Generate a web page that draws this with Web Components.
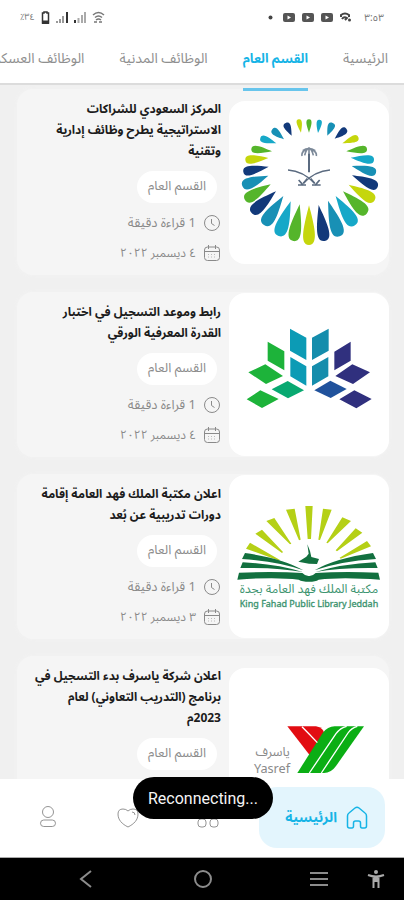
<!DOCTYPE html>
<html lang="ar" dir="rtl">
<head>
<meta charset="utf-8">
<meta name="viewport" content="width=device-width, initial-scale=1">
<title>القسم العام</title>
<style>
html, body { margin: 0; height: 100%; }
body { font-family: "Noto Sans Arabic", "Noto Sans", "DejaVu Sans", sans-serif; background: #fff; }
</style>
</head>
<body>
<news-app></news-app>

<script>
const define = (name, html, setup) => {
  const tpl = document.createElement('template');
  tpl.innerHTML = html;
  customElements.define(name, class extends HTMLElement {
    constructor() {
      super();
      this.attachShadow({ mode: 'open' }).append(tpl.content.cloneNode(true));
    }
    connectedCallback() { if (setup) setup(this, this.shadowRoot); }
  });
};

/* System status bar */
define('status-bar', `
<style>
:host { display: flex; direction: ltr; align-items: center; justify-content: space-between; height: 34px; padding: 0 20px; color: #777; font-size: 10px; flex: none; }
div { display: flex; align-items: center; gap: 7px; }
.l { gap: 6px; font-size: 9px; }
.dot { margin-right: 3px; }
.time { margin-left: 6px; }
svg { display: block; }
</style>
<div class="l">
  <span>٪٣٤</span>
  <svg width="9" height="13" viewBox="0 0 9 13"><path d="M3 1h3v1h1.500v10h-6V2H3z" fill="none" stroke="#333" stroke-width="1.500"/><path d="M1 9.500h7V13H1z" fill="#333"/></svg>
  <svg width="12" height="12" viewBox="0 0 12 12"><path d="M0 11h2M4 12V8M7 12V5" stroke="#999" stroke-width="2"/><path d="M11 12V1" stroke="#333" stroke-width="2"/></svg>
  <svg width="12" height="12" viewBox="0 0 12 12"><path d="M1 12V9" stroke="#333" stroke-width="2"/><path d="M4.500 12V7M8 12V4M11 12V1" stroke="#aaa" stroke-width="2"/></svg>
  <svg width="13" height="12" viewBox="0 0 13 12"><path d="M1 4q5.500-5 11 0M3 6.500q3.500-3 7 0M4 9q2.500-2 5 0M2 11h3M7 11h3" fill="none" stroke="#777" stroke-width="1.500"/></svg>
</div>
<div>
  <svg class="dot" width="5" height="5" viewBox="0 0 5 5"><circle cx="2.500" cy="2.500" r="2" fill="#444"/></svg>
  <svg width="12" height="9" viewBox="0 0 12 9"><rect width="12" height="9" rx="2" fill="#555"/><path d="M4.500 2.500v4L8 4.500z" fill="#fff"/></svg>
  <svg width="12" height="9" viewBox="0 0 12 9"><rect width="12" height="9" rx="2" fill="#555"/><path d="M4.500 2.500v4L8 4.500z" fill="#fff"/></svg>
  <svg width="12" height="9" viewBox="0 0 12 9"><rect width="12" height="9" rx="2" fill="#555"/><path d="M4.500 2.500v4L8 4.500z" fill="#fff"/></svg>
  <svg width="11" height="10" viewBox="0 0 11 10"><path d="M1 5V3q4-3 8 0v2M2 7q2-3 5-1l-2 2" fill="none" stroke="#444" stroke-width="2"/><circle cx="9.500" cy="8" r="1.500" fill="#444"/></svg>
  <span class="time">٣:٥٣</span>
</div>`);

/* Category tabs */
define('tab-item', `
<style>
:host { display: block; position: relative; flex: none; }
a { display: block; line-height: 50px; color: #8f8f8f; text-decoration: none; white-space: nowrap; }
:host([active]) a { color: #16b4e6; font-size: 13px; font-weight: 700; }
:host([active])::after { content: ""; position: absolute; left: 0; right: 0; bottom: -8px; height: 3px; background: #68c5ec; z-index: 2; }
</style><a href="#"><slot></slot></a>`);

define('tab-bar', `
<style>
:host { display: flex; gap: 35px; padding: 0 16px; height: 49px; font-size: 14px; background: #fff; border-bottom: 2px solid #dcdcdc; flex: none; position: relative; z-index: 2; }
</style><slot></slot>`);

/* Article card */
define('category-chip', `
<style>
:host { display: block; align-self: flex-start; margin: 9px 4px 10px; }
a { display: block; box-sizing: border-box; height: 32px; min-width: 80px; padding: 0 11px; line-height: 31px; border-radius: 16px; background: #fff; color: #8c8c8c; font-size: 13px; text-align: center; text-decoration: none; }
</style><a href="#"><slot></slot></a>`);

define('meta-row', `
<style>
:host { display: flex; align-items: center; gap: 7px; height: 20px; color: #8a8a8a; font-size: 13px; white-space: nowrap; }
:host([icon=date]) { font-size: 12px; }
svg { display: none; width: 18px; height: 18px; fill: none; stroke: #8a8a8a; flex: none; }
:host([icon=clock]) .clock, :host([icon=date]) .date { display: block; }
</style>
<svg class="clock" viewBox="0 0 18 18"><circle cx="9" cy="9" r="7.500"/><path d="M8.500 5v4.500l3 2"/></svg>
<svg class="date" viewBox="0 0 18 18"><rect x="1.500" y="3" width="15" height="13.500" rx="3"/><path d="M1.500 7.500h15M5.500 1v4M12.500 1v4"/><path d="M5 10.500h8M5 13h8" stroke-dasharray="1 2" stroke="#bbb"/></svg>
<span><slot></slot></span>`);

define('news-card', `
<style>
:host { display: flex; align-items: center; background: #f5f5f5; border-radius: 16px; box-shadow: 0 0 4px #f3f3f3; flex: none; }
.pic { width: 160px; height: 163px; border-radius: 16px; background: #fff; overflow: hidden; flex: none; }
.body { flex: 1; min-width: 0; display: flex; flex-direction: column; padding: 10px 8px 12px; }
h2 { margin: 0; font-size: 12px; line-height: 21px; font-weight: 700; color: #1c1c1c; white-space: nowrap; }
.meta { display: grid; gap: 10px; }
:host([folded]) .meta { visibility: hidden; }
</style>
<div class="pic"><slot name="logo"></slot></div>
<div class="body">
  <h2><slot name="title"></slot></h2>
  <category-chip>القسم العام</category-chip>
  <div class="meta"><meta-row icon="clock">1 قراءة دقيقة</meta-row><meta-row icon="date"><slot name="date"></slot></meta-row></div>
</div>`);

/* Logos */
const svgCss = '<style>:host{display:block;height:100%}svg{display:block;width:100%;height:100%}</style>';

define('logo-petals', svgCss + `
<svg viewBox="27 47 480 489"><g id="p"></g>
<g fill="none" stroke="#5b6b80" stroke-width="4"><path d="M267 205v56" stroke-width="6"/><path d="M246 212q-2-12 10-18M254 210q4-18 13-22M267 208v-22M280 210q-4-18-13-22M289 212q2-12-12-18M248 196q18-12 38 0" stroke-width="5" opacity=".8"/><path d="M204 254q45 3 80 40M330 254q-45 3-80 40" stroke-width="4"/><path d="M236 284l14 16M234 299h24M299 284l-14 16M276 299h26M262 280l-12 14M272 280l12 14" stroke-width="5"/></g></svg>`,
(host, root) => {
  const N = '#12397a', T = '#1890b5', C = '#16a8c8', G = '#55b52b', Y = '#c5d60c';
  /* outer x, outer y, inner x, inner y, width, colour */
  const petals = [
    [267,102,267,142,12,G],[236,102,243,142,12,Y],[299,103,294,143,12,C],[197,113,215,151,16,N],[338,113,322,151,16,T],
    [157,132,192,162,16,T],[379,130,344,160,16,N],[121,158,169,174,16,C],[415,156,367,174,16,Y],
    [94,191,156,198,17,G],[441,191,379,198,17,G],[76,224,145,218,19,Y],[462,224,392,217,19,C],
    [70,260,146,244,21,N],[468,262,395,242,21,T],[67,302,145,271,25,T],[473,305,396,270,23,N],
    [75,344,152,297,25,G],[464,345,386,298,25,Y],[95,383,168,318,27,N],[440,385,369,318,28,G],
    [132,419,190,332,29,T],[405,420,347,332,29,C],[176,452,212,348,29,C],[359,453,324,346,29,T],
    [220,467,239,357,27,G],[314,467,296,359,27,N],[267,479,267,360,27,Y]];
  root.getElementById('p').innerHTML = petals.map(([ox, oy, ix, iy, w, c]) => {
    const dx = ox - ix, dy = oy - iy, l = Math.hypot(dx, dy), nx = -dy / l * w, ny = dx / l * w;
    const at = (t, s) => `${Math.round(ix + dx * t + nx * s)} ${Math.round(iy + dy * t + ny * s)}`;
    return `<path fill="${c}" d="M${ix} ${iy}C${at(.45, .5)} ${at(1, 1.2)} ${ox} ${oy}C${at(1, -1.2)} ${at(.45, -.5)} ${ix} ${iy}z"/>`;
  }).join('');
});

define('logo-rhombs', svgCss + `
<svg viewBox="27 22 480 489">
<path fill="#0c9bb5" d="M210 129l49 27v67l-49-28zM211 214l48 28v58l-48-28z"/>
<path fill="#158dac" d="M326 129l-50 27v67l50-28zM325 214l-49 28v58l49-28z"/>
<path fill="#1db33a" d="M143 168l50 29v57l-50-29zM85 260l51-24 53 35-51 24zM80 341l41-27 55 26-50 27z"/>
<path fill="#08a971" d="M155 311l48-25 49 28-48 24z"/>
<path fill="#20529c" d="M380 310l-49-25-48 29 49 23z"/>
<path fill="#30307e" d="M392 168l-49 30v56l49-29zM450 260l-53-24-51 35 53 24zM455 340l-52-26-45 27 51 27z"/>
</svg>`);

define('logo-library', svgCss + `
<style>text{fill:#3d9470;font-family:"Noto Sans Arabic","Noto Sans","DejaVu Sans",sans-serif}</style>
<svg viewBox="27 14 480 489">
<path fill="#b5d016" d="M256 107h22l-5 99h-10zM198 118l26-3 18 93-5 2zM335 118l-26-3-14 93 5 1zM139 152l24-9 51 77-4 2zM393 152l-26-11-48 76 4 2zM106 190l20-12 63 67-3 3zM427 187l-20-13-60 66 4 3zM78 235l12-18 90 52-2 2zM453 228l-12-16-82 50 3 3z"/>
<path fill="#12703f" d="M75 248q115 16 175 52-75-27-184-34zM459 248q-115 16-175 52 75-27 184-34zM68 276q100 5 180 29-75-14-187-12zM466 276q-100 5-180 29 75-14 187-12zM57 307q110-4 190 1 10 10 20 9 10 1 20-9 80-5 188-1l5 21q-115-9-184 0-9 6-29 6-20 0-31-6-70-9-184 0z"/>
<path fill="#12703f" d="M262 222l8 20 4 18 23 6-6 15-24-1-32-6 24-15 7-9z"/>
<text x="267" y="369" font-size="37" text-anchor="middle" direction="rtl">مكتبة الملك فهد العامة بجدة</text>
<text x="267" y="410" font-size="27" text-anchor="middle" direction="ltr" stroke="#3d9470">King Fahad Public Library Jeddah</text>
</svg>`);

define('logo-yasref', svgCss + `
<style>text{fill:#8a8a8a;font-family:"Noto Sans Arabic","Noto Sans","DejaVu Sans",sans-serif}</style>
<svg viewBox="27 71 480 489">
<path fill="#e20c12" d="M202 246h86q24 5 24 22l-41 67z"/>
<path fill="#0bae14" d="M232 386l76-120q15-20 36-20h88l-84 119q-15 21-36 21z"/>
<path d="M246 247q21 21 46 48M268 386l80-118q13-18 32-22M304 386l80-120q10-15 28-20" fill="none" stroke="#fff" stroke-width="4"/>
<text x="158" y="335" font-size="38" text-anchor="middle" direction="rtl">ياسرف</text>
<text x="156" y="386" font-size="38" text-anchor="middle" direction="ltr">Yasref</text>
</svg>`);

/* Bottom navigation */
define('nav-item', `
<style>
:host { display: block; flex: 1; }
a { display: flex; align-items: center; justify-content: center; gap: 8px; height: 61px; color: #949494; text-decoration: none; font-size: 14px; border-radius: 18px; }
:host([active]) { flex: none; width: 126px; margin-left: 11px; }
:host([active]) a { justify-content: flex-start; padding: 0 16px; background: #e3f5fd; color: #16b4e6; font-weight: 700; }
</style><a href="#"><slot name="icon"></slot><slot></slot></a>`);

define('bottom-nav', `
<style>
:host { display: flex; align-items: flex-start; height: 70px; padding: 8px 19px 0 8px; background: #fff; border-bottom: 1px solid #aaa; position: relative; flex: none; }
nav-item { box-sizing: border-box; }
svg { width: 24px; height: 24px; fill: none; stroke: currentColor; }
::slotted(toast-message) { position: absolute; left: 133px; top: -2px; }
</style>
<nav-item active><svg slot="icon" viewBox="0 0 24 24" stroke-width="1.500"><path d="M2.500 10q0-2 1.500-3l6-5q2-1.500 4 0l6 5q1.500 1 1.500 3v10q0 2-2 2H17q-1.500 0-1.500-2v-3q0-2-2-2h-3q-2 0-2 2v3q0 2-1.500 2H4.500q-2 0-2-2z"/></svg>الرئيسية</nav-item>
<nav-item aria-label="الأقسام"><svg slot="icon" viewBox="0 0 24 24"><rect x="2" y="2" width="8" height="8" rx="3"/><rect x="14" y="2" width="8" height="8" rx="3"/><rect x="2" y="13" width="8" height="8" rx="3"/><rect x="14" y="13" width="8" height="8" rx="3"/></svg></nav-item>
<nav-item aria-label="المفضلة"><svg slot="icon" viewBox="0 0 24 24"><path d="M12 21C6 18 2 14 2 8q0-5 5-5 3 0 5 2 2-2 5-2 5 0 5 5c0 6-4 10-10 13zM16 6q3 0 3 3"/></svg></nav-item>
<nav-item aria-label="حسابي"><svg slot="icon" viewBox="0 0 24 24"><circle cx="12" cy="6" r="5.500"/><rect x="4.500" y="14" width="15" height="6.500" rx="3.250"/></svg></nav-item>
<slot></slot>`);

define('toast-message', `
<style>
:host { display: block; direction: ltr; height: 42px; width: 140px; border-radius: 21px; background: #000; color: #f5f5f5; font: 16px/43px Roboto, sans-serif; text-align: center; }
</style><span role="status"><slot></slot></span>`);

define('system-nav', `
<style>
:host { display: grid; direction: ltr; grid-template-columns: 172fr 61fr 57fr 58fr 56fr; height: 42px; background: #000; flex: none; }
button { border: 0; background: none; padding: 0; display: grid; place-items: center; color: #8c8c8c; }
.apps { grid-column: 4; }
svg { fill: none; stroke: currentColor; stroke-width: 2; }
</style>
<button aria-label="رجوع"><svg width="20" height="20"><path d="M15 2L5 10l10 8"/></svg></button>
<button aria-label="الشاشة الرئيسية"><svg width="20" height="20"><circle cx="10" cy="10" r="8"/></svg></button>
<button class="apps" aria-label="التطبيقات"><svg width="20" height="20"><path d="M1 4h18M1 10h18M1 16h18"/></svg></button>
<button aria-label="إمكانية الوصول"><svg width="20" height="20"><path d="M2 6q8 3 16 0M10 7v6M7.500 7v12M12.500 7v12" stroke="#aaa"/><path d="M8 7h4v6H8z" fill="#aaa" stroke="none"/><circle cx="10" cy="3" r="2" fill="#aaa" stroke="none"/></svg></button>`);

define('news-app', `
<style>
:host { display: flex; flex-direction: column; height: 100vh; overflow: hidden; }
main { flex: 1; min-height: 0; overflow: hidden; background: #f0f0f0; display: flex; flex-direction: column; gap: 17px; padding: 4px 15px 0 17px; }
.t span { display: block; }
</style>
<status-bar></status-bar>
<tab-bar><tab-item>الرئيسية</tab-item><tab-item active>القسم العام</tab-item><tab-item>الوظائف المدنية</tab-item><tab-item>الوظائف العسكرية</tab-item></tab-bar>
<main>
<news-card><logo-petals slot="logo"></logo-petals><div class="t" slot="title"><span>المركز السعودي للشراكات</span><span>الاستراتيجية يطرح وظائف إدارية</span><span>وتقنية</span></div><span slot="date">٤ ديسمبر ٢٠٢٢</span></news-card>
<news-card><logo-rhombs slot="logo"></logo-rhombs><div class="t" slot="title"><span>رابط وموعد التسجيل في اختبار</span><span>القدرة المعرفية الورقي</span></div><span slot="date">٤ ديسمبر ٢٠٢٢</span></news-card>
<news-card><logo-library slot="logo"></logo-library><div class="t" slot="title"><span>اعلان مكتبة الملك فهد العامة إقامة</span><span>دورات تدريبية عن بُعد</span></div><span slot="date">٣ ديسمبر ٢٠٢٢</span></news-card>
<news-card folded><logo-yasref slot="logo"></logo-yasref><div class="t" slot="title"><span>اعلان شركة ياسرف بدء التسجيل في</span><span>برنامج (التدريب التعاوني) لعام</span><span>2023م</span></div></news-card>
</main>
<bottom-nav><toast-message>Reconnecting...</toast-message></bottom-nav>
<system-nav></system-nav>`);
</script>
</body>
</html>
